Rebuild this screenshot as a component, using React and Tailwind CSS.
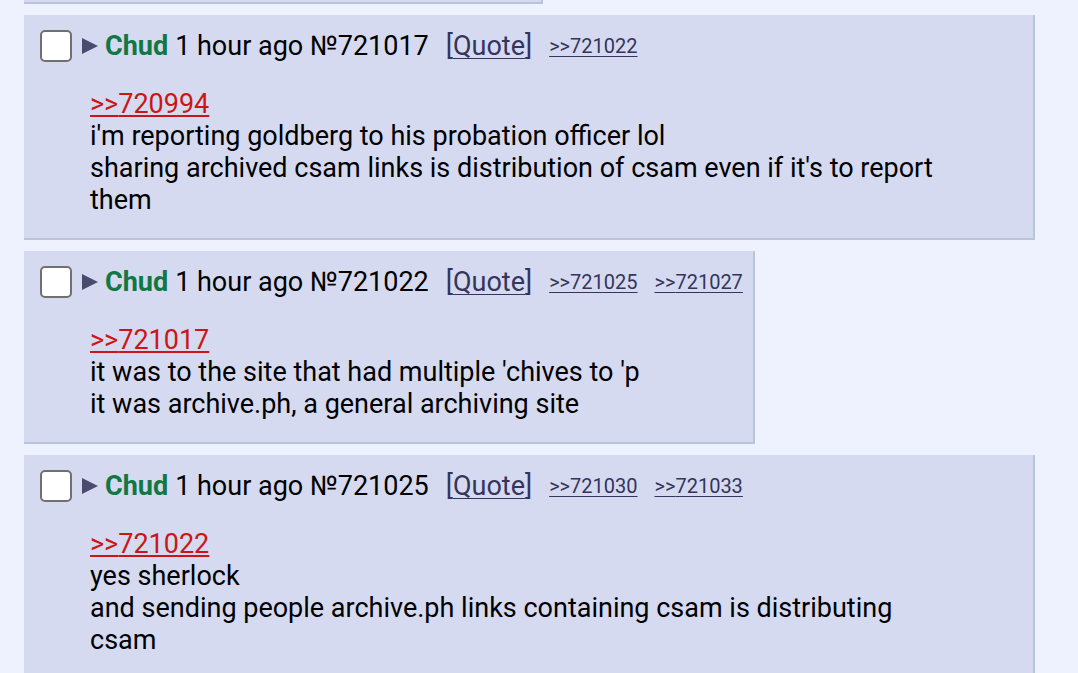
const posts = [
  {
    no: '721017',
    backlinks: ['721022'],
    quote: '720994',
    lines: [
      "i'm reporting goldberg to his probation officer lol",
      "sharing archived csam links is distribution of csam even if it's to report them",
    ],
  },
  {
    no: '721022',
    backlinks: ['721025', '721027'],
    quote: '721017',
    lines: [
      "it was to the site that had multiple 'chives to 'p",
      'it was archive.ph, a general archiving site',
    ],
  },
  {
    no: '721025',
    backlinks: ['721030', '721033'],
    quote: '721022',
    lines: [
      'yes sherlock',
      'and sending people archive.ph links containing csam is distributing csam',
    ],
  },
];

function Post({ post }) {
  return (
    <div className="mt-[11px] ml-[24px] w-fit max-w-[1011px] bg-[#d6daf0] border-r-2 border-b-2 border-[#b7c5d9] pl-[16px] pr-[10px] pt-[15px] pb-[22px]">
      <div className="flex items-center h-[32px] whitespace-nowrap">
        <div className="w-[32px] h-[32px] rounded-[5px] border-2 border-[#707070] bg-white" />
        <svg width="16" height="16" viewBox="0 0 16 16" className="ml-[10px]">
          <polygon points="0,0 16,8 0,16" fill="#4a4b6e" />
        </svg>
        <span className="ml-[7px] font-bold text-[#117743]">Chud</span>
        <span className="ml-[7px] text-black">1 hour ago №{post.no}</span>
        <span className="ml-[17px] text-[#34345c]">
          [<span className="underline decoration-1 underline-offset-[3px]">Quote</span>]
        </span>
        {post.backlinks.map((b) => (
          <span
            key={b}
            className="ml-[17px] text-[20px] text-[#34345c] underline decoration-1 underline-offset-[3px]"
          >
            &gt;&gt;{b}
          </span>
        ))}
      </div>
      <div className="mt-[26px] ml-[50px] mr-[82px] text-black">
        <div className="text-[#cc1515] underline decoration-2 underline-offset-[2px] w-fit">
          &gt;&gt;{post.quote}
        </div>
        {post.lines.map((l, i) => (
          <div key={i}>{l}</div>
        ))}
      </div>
    </div>
  );
}

export default function App() {
  return (
    <div className="min-h-screen bg-[#eef2ff] font-['Roboto',sans-serif] text-[27px] leading-[32px] overflow-hidden">
      <div className="ml-[24px] w-[519px] h-[4px] bg-[#d6daf0] border-r-2 border-b-2 border-[#b7c5d9]" />
      {posts.map((p) => (
        <Post key={p.no} post={p} />
      ))}
    </div>
  );
}
